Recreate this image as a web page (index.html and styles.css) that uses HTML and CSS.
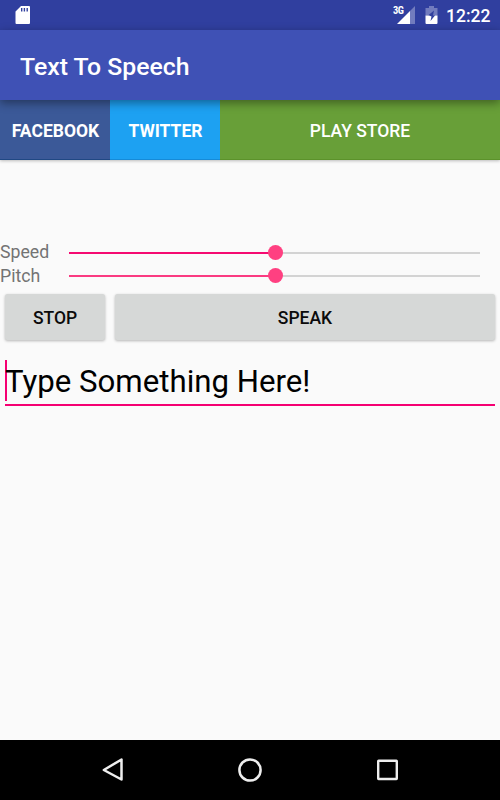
FILE: index.html
```html
<!DOCTYPE html>
<html lang="en">
<head>
<meta charset="utf-8">
<title>Text To Speech</title>
<link rel="stylesheet" href="styles.css">
</head>
<body>
<div class="screen">
  <div class="status">
    <svg class="sd" width="16" height="20" viewBox="0 0 16 20"><path fill="#fff" fill-rule="evenodd" d="M6 1H14Q15 1 15 2V18Q15 19 14 19H1.500Q.5 19 .5 18V6.500ZM6 3V6.500H7.400V3ZM8.700 3V6.500H10.100V3ZM11.500 3V6.500H12.900V3Z"/></svg>
    <div class="signal"><span class="net">3G</span>
      <svg width="19" height="20" viewBox="0 0 19 20"><path fill="#fff" fill-opacity=".32" d="M19 1V19H14V6Z"/><path fill="#fff" d="M14 6V19H1Z"/></svg>
    </div>
    <svg class="battery" width="13" height="20" viewBox="0 0 13 20"><path fill="#fff" fill-opacity=".32" d="M4 1H9V3H12.500V10.500H8L9 5.500L3 10.500H.5V3H4Z"/><path fill="#fff" d="M.5 10.500H4L6.500 11.500L5.500 16L10 10.500H12.500V18Q12.500 19 11.500 19H1.500Q.5 19 .5 18Z"/></svg>
    <span class="clock">12:22</span>
  </div>
  <header class="appbar"><h1>Text To Speech</h1></header>
  <nav class="links">
    <button class="link facebook">FACEBOOK</button>
    <button class="link twitter">TWITTER</button>
    <button class="link play">PLAY STORE</button>
  </nav>
  <main class="content">
    <div class="sliders">
      <div class="row"><span class="label">Speed</span><div class="track"><div class="fill"></div><div class="thumb"></div></div></div>
      <div class="row"><span class="label pitch">Pitch</span><div class="track"><div class="fill soft"></div><div class="thumb"></div></div></div>
    </div>
    <div class="actions">
      <button class="action stop">STOP</button>
      <button class="action speak">SPEAK</button>
    </div>
    <div class="field"><span class="caret"></span><span class="value">Type Something Here!</span></div>
  </main>
  <footer class="navbar">
    <svg width="24" height="26" viewBox="0 0 24 26"><path d="M20.500 2.500V22.500L2.800 13Z" fill="none" stroke="#eee" stroke-width="2.500" stroke-linejoin="round"/></svg>
    <svg width="26" height="26" viewBox="0 0 26 26"><circle cx="13" cy="13" r="10.600" fill="none" stroke="#eee" stroke-width="2.500"/></svg>
    <svg width="24" height="26" viewBox="0 0 24 26"><rect x="3.200" y="3.800" width="18.600" height="18.200" rx=".4" fill="none" stroke="#eee" stroke-width="2.400"/></svg>
  </footer>
</div>
</body>
</html>
```
FILE: styles.css
```css
* { box-sizing: border-box; }
body { margin: 0; font-family: Roboto, sans-serif; }
button { border: 0; padding: 0; margin: 0; font: 500 17.5px/20px Roboto, sans-serif; }
svg { display: block; flex: none; }
.screen { width: 500px; height: 800px; display: flex; flex-direction: column; background: #fafafa; overflow: hidden; }
.status { height: 30px; flex: none; display: flex; align-items: center; padding: 0 9px 0 15px; background: #303f9f; color: #fff; }
.signal { display: flex; margin-left: auto; }
.net { font: 700 10.500px/12px "Roboto Condensed", Roboto, sans-serif; width: 11px; margin: 0 -8px 0 0; letter-spacing: -.5px; }
.battery { margin: 0 8px 0 10px; }
.clock { font-weight: 500; font-size: 17.5px; line-height: 30px; width: 45px; padding-top: 2px; }
.appbar { height: 70px; flex: none; display: flex; align-items: center; padding: 4px 20px 0; background: #3f51b5; color: #fff; position: relative; z-index: 1; box-shadow: 0 3px 9px rgba(0,0,0,.4); }
.appbar h1 { margin: 0; font-size: 24.8px; line-height: 30px; font-weight: 500; }
.links { height: 60px; flex: none; display: flex; box-shadow: 0 1px 3px rgba(0,0,0,.25); }
.link { color: #fff; padding-top: 2px; }
.facebook { width: 110px; padding-left: 1px; background: #3b5998; font-weight: 700; border-bottom: 1px solid #204884; }
.twitter { width: 110px; padding-left: 1px; background: #1da1f2; font-weight: 700; border-bottom: 1px solid #168bd8; }
.play { flex: 1; background: #689f38; border-bottom: 1px solid #5c922b; }
.content { flex: 1; padding-top: 81px; }
.row { height: 23px; display: flex; align-items: center; }
.label { width: 69px; color: #737373; font-size: 17.7px; line-height: 23px; }
.pitch { padding-top: 2px; }
.track { width: 411px; height: 2px; display: flex; align-items: center; background: #d3d3d3; }
.fill { width: 206px; height: 2px; background: #f50a71; }
.fill.soft { background: #fa3a81; }
.thumb { width: 15px; height: 15px; margin-left: -7.5px; border-radius: 50%; background: #ff4081; flex: none; }
.actions { display: flex; gap: 10px; padding: 7px 5px 0; }
.action { height: 46px; padding-top: 1px; border-radius: 2.500px; background: #d6d8d7; color: #0b0b0b; box-shadow: 0 1px 3px rgba(0,0,0,.28); }
.stop { width: 100px; }
.speak { flex: 1; }
.field { height: 46px; margin: 20px 5px 0; display: flex; border-bottom: 2px solid #f50072; }
.caret { width: 2px; height: 41px; background: #f50072; margin-right: -2px; }
.value { font-size: 31.200px; line-height: 43px; color: #000; white-space: nowrap; }
.navbar { height: 60px; flex: none; display: flex; align-items: center; justify-content: space-between; padding: 0 101px; background: #000; }
```
